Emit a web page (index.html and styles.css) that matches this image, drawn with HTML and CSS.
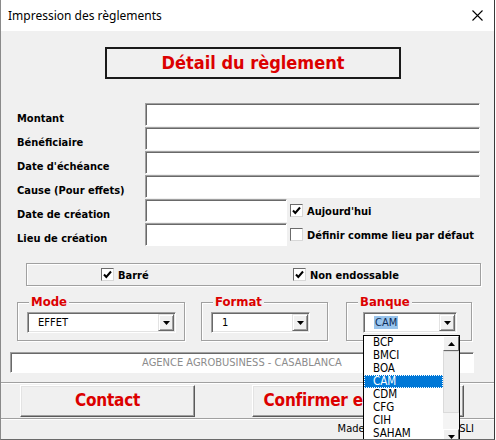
FILE: index.html
```html
<!DOCTYPE html>
<html lang="fr">
<head>
<meta charset="utf-8">
<title>Impression des règlements</title>
<link rel="stylesheet" href="styles.css">
</head>
<body>
<div class="window">
  <div class="titlebar">
    <span class="title">Impression des règlements</span>
    <svg class="close" width="11" height="11" viewBox="0 0 11 11"><path d="M0.5 0.5 L10.5 10.5 M10.5 0.5 L0.5 10.5" stroke="#000" stroke-width="1.1" fill="none"/></svg>
  </div>
  <div class="client">
    <div class="header-box">Détail du règlement</div>

    <div class="form">
      <label class="lbl">Montant</label><div class="field"></div>
      <label class="lbl">Bénéficiaire</label><div class="field"></div>
      <label class="lbl">Date d'échéance</label><div class="field"></div>
      <label class="lbl">Cause (Pour effets)</label><div class="field"></div>
      <label class="lbl">Date de création</label>
      <div class="field-line">
        <div class="field short"></div>
        <span class="check checked"><svg viewBox="0 0 11 11"><path d="M2 5.5 L4.3 8 L9 2.5" stroke="#000" stroke-width="2" fill="none"/></svg></span>
        <span class="check-lbl">Aujourd'hui</span>
      </div>
      <label class="lbl">Lieu de création</label>
      <div class="field-line">
        <div class="field short"></div>
        <span class="check"></span>
        <span class="check-lbl">Définir comme lieu par défaut</span>
      </div>
    </div>

    <div class="options">
      <div class="opt first">
        <span class="check checked"><svg viewBox="0 0 11 11"><path d="M2 5.5 L4.3 8 L9 2.5" stroke="#000" stroke-width="2" fill="none"/></svg></span>
        <span class="check-lbl">Barré</span>
      </div>
      <div class="opt">
        <span class="check checked"><svg viewBox="0 0 11 11"><path d="M2 5.5 L4.3 8 L9 2.5" stroke="#000" stroke-width="2" fill="none"/></svg></span>
        <span class="check-lbl">Non endossable</span>
      </div>
    </div>

    <div class="groups">
      <div class="group g-mode">
        <span class="legend">Mode</span>
        <div class="combo c-mode"><span class="combo-text">EFFET</span><span class="drop-btn"><svg width="7" height="4" viewBox="0 0 7 4"><path d="M0 0 H7 L3.5 4 Z" fill="#000"/></svg></span></div>
      </div>
      <div class="group g-format">
        <span class="legend">Format</span>
        <div class="combo c-format"><span class="combo-text">1</span><span class="drop-btn"><svg width="7" height="4" viewBox="0 0 7 4"><path d="M0 0 H7 L3.5 4 Z" fill="#000"/></svg></span></div>
      </div>
      <div class="group g-banque">
        <span class="legend">Banque</span>
        <div class="combo c-banque"><span class="combo-text"><span class="sel-text">CAM</span></span><span class="drop-btn"><svg width="7" height="4" viewBox="0 0 7 4"><path d="M0 0 H7 L3.5 4 Z" fill="#000"/></svg></span></div>
      </div>
    </div>

    <div class="agence">AGENCE AGROBUSINESS - CASABLANCA</div>

    <div class="buttons">
      <div class="btn b-contact">Contact</div>
      <div class="btn b-confirm">Confirmer et imprimer</div>
    </div>

    <div class="status">Made by Y. ELMOUSSLI - SLI</div>
  </div>

  <div class="dropdown">
    <div class="list">
      <div class="item">BCP</div>
      <div class="item">BMCI</div>
      <div class="item">BOA</div>
      <div class="item selected">CAM</div>
      <div class="item">CDM</div>
      <div class="item">CFG</div>
      <div class="item">CIH</div>
      <div class="item">SAHAM</div>
    </div>
    <div class="scrollbar">
      <div class="sb-btn"><svg width="7" height="4" viewBox="0 0 7 4"><path d="M0 4 H7 L3.5 0 Z" fill="#000"/></svg></div>
      <div class="sb-thumb"></div>
      <div class="sb-track"></div>
      <div class="sb-btn"><svg width="7" height="4" viewBox="0 0 7 4"><path d="M0 0 H7 L3.5 4 Z" fill="#000"/></svg></div>
    </div>
  </div>
</div>
</body>
</html>
```
FILE: styles.css
```css
* { box-sizing: border-box; }
html, body { margin: 0; padding: 0; background: #ffffff; }

.window {
  position: relative;
  width: 495px;
  height: 440px;
  border-left: 1px solid #8a8a8a;
  border-right: 1px solid #3a3a3a;
  border-bottom: 1px solid #6a6a6a;
  background: #f0f0f0;
  overflow: hidden;
  display: flex;
  flex-direction: column;
  font-family: "DejaVu Sans Condensed", "DejaVu Sans", sans-serif;
  font-size: 11px;
  color: #000;
}

.titlebar {
  height: 31px;
  background: #ffffff;
  display: flex;
  align-items: center;
  justify-content: space-between;
  padding: 0 11px 0 7px;
  flex: none;
}
.title {
  font-family: "Noto Sans", "Open Sans", sans-serif;
  font-size: 12px;
  color: #000;
}
.close { display: block; }

.client {
  flex: 1;
  display: flex;
  flex-direction: column;
  background: #f0f0f0;
}

.header-box {
  margin: 16px 0 0 104px;
  width: 296px;
  height: 32px;
  border: 2px solid #1a1a1a;
  color: #dc0000;
  font-weight: bold;
  font-size: 18px;
  text-align: center;
  line-height: 27px;
}

.form {
  margin-top: 24px;
  padding: 0 14px 0 16px;
  display: grid;
  grid-template-columns: 128px 1fr;
  grid-auto-rows: 23px;
  row-gap: 1px;
}
.lbl {
  font-weight: bold;
  display: flex;
  align-items: center;
  padding-top: 7px;
}
.field {
  background: #ffffff;
  border-top: 1px solid #a0a0a0;
  border-left: 1px solid #a0a0a0;
  border-right: 1px solid #ffffff;
  border-bottom: 1px solid #ffffff;
  box-shadow: inset 1px 1px 0 #696969;
  height: 23px;
}
.field-line {
  display: flex;
  align-items: center;
}
.field.short { width: 142px; flex: none; }

.check {
  width: 13px;
  height: 13px;
  flex: none;
  background: #fff;
  border-top: 1px solid #6b6b6b;
  border-left: 1px solid #6b6b6b;
  border-right: 1px solid #d8d8d8;
  border-bottom: 1px solid #d8d8d8;
  display: inline-flex;
  align-items: center;
  justify-content: center;
}
.check svg { width: 11px; height: 11px; display: block; }
.field-line .check { margin-left: 3px; }
.check-lbl {
  font-weight: bold;
  margin-left: 4px;
  white-space: nowrap;
  padding-top: 2px;
}

.options {
  margin: 17px 0 0 25px;
  width: 455px;
  height: 23px;
  border: 1px solid #a0a0a0;
  box-shadow: 1px 1px 0 #ffffff, inset 1px 1px 0 #ffffff;
  display: flex;
  align-items: center;
  padding-left: 74px;
}
.opt { display: flex; align-items: center; }
.opt.first { width: 192px; }

.groups {
  margin-top: 16px;
  display: flex;
  align-items: flex-start;
}
.group {
  height: 39px;
  border: 1px solid #a0a0a0;
  box-shadow: inset 1px 1px 0 #ffffff, 1px 1px 0 #ffffff;
  flex: none;
}
.g-mode { margin-left: 16px; width: 168px; }
.g-format { margin-left: 16px; width: 127px; }
.g-banque { margin-left: 18px; width: 126px; }
.legend {
  display: table;
  margin: -9px 0 0 11px;
  padding: 0 2px;
  background: #f0f0f0;
  color: #dc0000;
  font-weight: bold;
  font-size: 13px;
  line-height: 16px;
}
.combo {
  margin-top: 2px;
  height: 21px;
  background: #fff;
  border-top: 1px solid #a0a0a0;
  border-left: 1px solid #a0a0a0;
  border-right: 1px solid #ffffff;
  border-bottom: 1px solid #ffffff;
  box-shadow: inset 1px 1px 0 #696969, inset -1px -1px 0 #e3e3e3;
  display: flex;
  align-items: center;
  justify-content: space-between;
  padding: 0 1px 0 10px;
}
.c-mode { margin-left: 9px; width: 149px; }
.c-format { margin-left: 9px; width: 99px; }
.c-banque { margin-left: 16px; width: 94px; }
.combo-text { font-size: 11px; }
.sel-text {
  background: #99c4ec;
  color: #0b2b57;
  padding: 0 1px;
}
.drop-btn {
  width: 16px;
  height: 17px;
  background: #f0f0f0;
  border-top: 1px solid #e3e3e3;
  border-left: 1px solid #e3e3e3;
  border-right: 1px solid #696969;
  border-bottom: 1px solid #696969;
  box-shadow: inset 1px 1px 0 #ffffff, inset -1px -1px 0 #a0a0a0;
  display: flex;
  align-items: center;
  justify-content: center;
}

.agence {
  margin: 11px 0 0 9px;
  width: 464px;
  height: 21px;
  background: #fff;
  border-top: 1px solid #a0a0a0;
  border-left: 1px solid #a0a0a0;
  border-right: 1px solid #ffffff;
  border-bottom: 1px solid #ffffff;
  box-shadow: inset 1px 1px 0 #696969;
  color: #8c8c8c;
  text-align: center;
  line-height: 19px;
  font-size: 11px;
}

.buttons {
  margin-top: 9px;
  border-top: 1px solid #a0a0a0;
  box-shadow: inset 0 1px 0 #ffffff;
  display: flex;
  padding-top: 2px;
  height: 36px;
}
.btn {
  height: 32px;
  background: #f0f0f0;
  border-top: 1px solid #ffffff;
  border-left: 1px solid #ffffff;
  border-right: 1px solid #5a5a5a;
  border-bottom: 1px solid #5a5a5a;
  box-shadow: inset -1px -1px 0 #a0a0a0, inset 1px 1px 0 #e3e3e3;
  color: #dc0000;
  font-weight: bold;
  font-size: 17px;
  letter-spacing: -0.2px;
  display: flex;
  align-items: center;
  justify-content: center;
  white-space: nowrap;
  flex: none;
  padding-bottom: 2px;
}
.b-contact { margin-left: 19px; width: 175px; }
.b-confirm { margin-left: 57px; width: 212px; }

.status {
  border-top: 1px solid #a0a0a0;
  box-shadow: inset 0 1px 0 #ffffff;
  flex: 1;
  text-align: right;
  padding-right: 20px;
  line-height: 20px;
  font-size: 11px;
}

.dropdown {
  position: absolute;
  left: 362px;
  top: 335px;
  width: 97px;
  height: 110px;
  background: #fff;
  border: 1px solid #000;
  display: flex;
}
.list {
  width: 79px;
  flex: none;
}
.item {
  height: 13px;
  line-height: 13px;
  padding-left: 9px;
  font-size: 11.5px;
  white-space: nowrap;
}
.item.selected {
  background: #0078d7;
  color: #fff;
  outline: 1px dotted #ffffff;
  outline-offset: -1px;
}
.scrollbar {
  width: 16px;
  flex: none;
  background: #f0f0f0;
  display: flex;
  flex-direction: column;
}
.sb-btn {
  height: 15px;
  flex: none;
  background: #f0f0f0;
  border-top: 1px solid #ffffff;
  border-left: 1px solid #ffffff;
  border-right: 1px solid #696969;
  border-bottom: 1px solid #696969;
  display: flex;
  align-items: center;
  justify-content: center;
}
.sb-thumb {
  height: 62px;
  flex: none;
  background: #ececec;
  border: 1px solid #dadada;
}
.sb-track { flex: 1; background: #f4f4f4; }
```
